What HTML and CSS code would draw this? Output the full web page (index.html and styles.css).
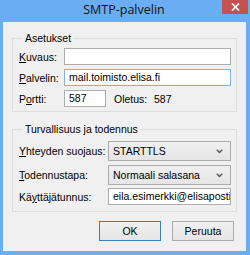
FILE: index.html
```html
<!DOCTYPE html>
<html lang="fi">
<head>
  <meta charset="UTF-8">
  <title>SMTP-palvelin</title>
  <link rel="stylesheet" href="styles.css">
</head>
<body>
  <div class="window">
    <div class="titlebar">
      <span></span>
      <span class="title">SMTP-palvelin</span>
      <span class="close-cell">
        <span class="close">
          <svg width="9" height="8" viewBox="0 0 9 8">
            <path d="M1 0.5 L8 7.5 M8 0.5 L1 7.5" stroke="#fff" stroke-width="1.7" fill="none"/>
          </svg>
        </span>
      </span>
    </div>

    <div class="content">
      <fieldset class="group">
        <legend>Asetukset</legend>
        <div class="rows rows-settings">
          <label><u>K</u>uvaus:</label>
          <div class="field"></div>

          <label><u>P</u>alvelin:</label>
          <div class="field focused">mail.toimisto.elisa.fi</div>

          <label>P<u>o</u>rtti:</label>
          <div class="port-row">
            <div class="field port">587</div>
            <span class="default-label">Oletus:</span>
            <span>587</span>
          </div>
        </div>
      </fieldset>

      <fieldset class="group group-security">
        <legend>Turvallisuus ja todennus</legend>
        <div class="rows rows-security">
          <label><u>Y</u>hteyden suojaus:</label>
          <div class="combo">
            <span>STARTTLS</span>
            <svg width="7" height="5" viewBox="0 0 7 5"><path d="M0.8 0.8 L3.5 3.6 L6.2 0.8" stroke="#555" stroke-width="1.4" fill="none"/></svg>
          </div>

          <label><u>T</u>odennustapa:</label>
          <div class="combo">
            <span>Normaali salasana</span>
            <svg width="7" height="5" viewBox="0 0 7 5"><path d="M0.8 0.8 L3.5 3.6 L6.2 0.8" stroke="#555" stroke-width="1.4" fill="none"/></svg>
          </div>

          <label>K&auml;<u>y</u>tt&auml;j&auml;tunnus:</label>
          <div class="field">eila.esimerkki@elisaposti.net</div>
        </div>
      </fieldset>

      <div class="buttons">
        <button class="btn btn-default">OK</button>
        <button class="btn">Peruuta</button>
      </div>
    </div>
  </div>
</body>
</html>
```

FILE: styles.css
```css
* {
  box-sizing: border-box;
  margin: 0;
  padding: 0;
}

body {
  font-family: 'Liberation Sans', Arial, sans-serif;
  font-size: 10.5px;
  color: #000;
  background: #fff;
}

.window {
  width: 250px;
  height: 255px;
  background-color: #6badf2;
  display: flex;
  flex-direction: column;
}

.titlebar {
  height: 22px;
  display: grid;
  grid-template-columns: 1fr auto 1fr;
  padding-right: 2px;
}

.title {
  align-self: center;
  padding-bottom: 3px;
  font-family: 'Open Sans', sans-serif;
  font-size: 12.5px;
  color: #111;
  white-space: nowrap;
}

.close-cell {
  display: flex;
  justify-content: flex-end;
  align-items: flex-start;
}

.close {
  width: 26px;
  height: 14px;
  background-color: #c75050;
  display: flex;
  align-items: center;
  justify-content: center;
}

.content {
  flex: 1;
  margin: 0 4px 4px 3px;
  background-color: #f0f0f0;
  padding: 9px 9px 10px 9px;
}

.group {
  border: 1px solid #dcdcdc;
  padding: 3px 5px 4px 6px;
  min-width: 0;
}

.group legend {
  margin-left: 4px;
  padding: 0 2px;
  line-height: 14px;
  font-size: 10.5px;
}

.group-security {
  margin-top: 10px;
  padding-top: 5px;
  padding-bottom: 6px;
}

.rows {
  display: grid;
  align-items: center;
}

.rows label {
  white-space: nowrap;
}

.rows-settings {
  grid-template-columns: 45px minmax(0, 1fr);
  row-gap: 4px;
}

.rows-security {
  grid-template-columns: 89px minmax(0, 1fr);
  row-gap: 4px;
}

.rows-security .field {
  margin-top: -1px;
}

.field {
  height: 17px;
  background: #fff;
  border: 1px solid #abadb3;
  padding: 0 4px;
  line-height: 15px;
  white-space: nowrap;
  overflow: hidden;
}

.field.focused {
  border-color: #7eb4ea;
}

.port-row {
  display: flex;
  align-items: center;
}

.field.port {
  width: 42px;
}

.default-label {
  margin-left: 8px;
  width: 40px;
}

.combo {
  height: 20px;
  border: 1px solid #acacac;
  background: linear-gradient(#f0f0f0, #e5e5e5);
  padding: 0 7px 0 4px;
  display: flex;
  align-items: center;
  justify-content: space-between;
}

.buttons {
  display: flex;
  justify-content: flex-end;
  gap: 11px;
  margin-top: 9px;
  padding-right: 3px;
}

.btn {
  width: 62px;
  height: 20px;
  border: 1px solid #acacac;
  background: linear-gradient(#f0f0f0, #e5e5e5);
  font-family: inherit;
  font-size: 10.5px;
  color: #000;
}

.btn-default {
  border-color: #3c7fb1;
}
```
